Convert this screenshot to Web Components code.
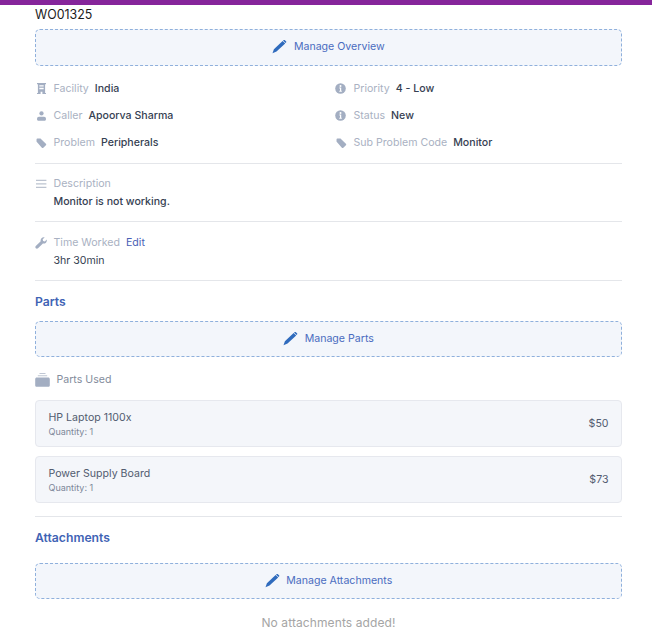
<!DOCTYPE html>
<html><head><meta charset="utf-8">
<style>
html,body{margin:0;padding:0;background:#fff;font-family:Inter,"Liberation Sans",sans-serif;}
</style></head><body>
<work-order></work-order>
<script>
const icons={
 building:'<svg width="9" height="11" viewBox="0 0 10 12" style="margin-left:1.5px"><path fill="#a3aec2" d="M0 0h10v1.2H9V11h1v1H6V9.5H4V12H0v-1h1V1.2H0zM2.6 2.4v1.5h4.8V2.4zM2.6 5.2v1.5h4.8V5.2z"/></svg>',
 user:'<svg width="9" height="10" viewBox="0 0 11 12" style="margin-left:1.5px"><circle cx="5.5" cy="2.8" r="2.6" fill="#a3aec2"/><path fill="#a3aec2" d="M2.4 6.8h6.2c1.3 0 2.3 1 2.3 2.2v1.4c0 .8-.5 1.4-1.2 1.4H1.3c-.7 0-1.2-.6-1.2-1.4V9c0-1.2 1-2.2 2.3-2.2z"/></svg>',
 tag:'<svg width="10.5" height="10.5" viewBox="0 0 12 12" style="margin:1px 0 0 1px"><path fill="#a3aec2" d="M.6 1.6C.6 1 1 .6 1.6.6h3.1c.4 0 .7.1 1 .4l5.6 5.6c.5.5.5 1.2 0 1.7l-2.9 2.9c-.5.5-1.2.5-1.7 0L1 4.7c-.3-.3-.4-.6-.4-1z"/></svg>',
 info:'<svg width="11" height="11" viewBox="0 0 11 11"><circle cx="5.5" cy="5.5" r="5.3" fill="#a3aec2"/><circle cx="5.5" cy="3" r="1" fill="#fff"/><path fill="#fff" d="M4.3 4.6h1.9v3.2h.6v1H4.3v-1h.7V5.6h-.7z"/></svg>',
 menu:'<svg width="11" height="10" viewBox="0 0 11 10" style="margin-left:.5px"><path fill="#bcc3d0" d="M0 .8h10.4v1.3H0zM0 4.3h10.4v1.3H0zM0 7.8h10.4v1.3H0z"/></svg>',
 wrench:'<svg width="12" height="12" viewBox="0 0 12 12"><path fill="#a3aec2" d="M11.7 2.6c.3 1.1 0 2.3-.8 3.1-.8.8-1.9 1-3 .7L3 11.3c-.6.6-1.6.6-2.2 0-.6-.6-.6-1.6 0-2.2l4.9-4.9c-.3-1.1 0-2.2.8-3C7.3.4 8.5.1 9.6.4L7.7 2.3l.4 1.8 1.8.4z"/></svg>',
 box:'<svg width="15" height="14" viewBox="0 0 15 14"><path fill="#c0c7d4" d="M4.5 0h6v1h-6zM2.8 2.2h9.4v1H2.8z"/><path fill="#a3aec2" d="M1.8 4.6h11.4c.9 0 1.6.7 1.6 1.6v6c0 .9-.7 1.6-1.6 1.6H1.8C.9 13.8.2 13.1.2 12.2v-6c0-.9.7-1.6 1.6-1.6z"/></svg>'
};
const pencil='<svg width="15" height="14" viewBox="0 0 15 14"><path fill="#2f6bbd" d="M10.6.9l2.6 2.5-8.7 8.2-4 1.6 1.4-3.9z M11.5.2c.4-.3 1-.3 1.4 0l1.1 1c.4.4.4 1 0 1.4l-.5.4-2.5-2.4z"/></svg>';

class Base extends HTMLElement{
 constructor(){super();this.attachShadow({mode:'open'}).innerHTML=this.markup();}
}
class ManageButton extends Base{
 markup(){return `<style>
 :host{display:flex;box-sizing:border-box;height:var(--h,37px);align-items:center;justify-content:center;gap:6.5px;background:#f3f6fb;border:1px dashed #8fb0dc;border-radius:5px;color:#4a6cc0;font-size:10.6px;line-height:14px}
 svg{display:block}
 </style>${pencil}<slot></slot>`;}
}
class InfoItem extends Base{
 markup(){return `<style>
 :host{display:flex;align-items:center;height:14px;font-size:10.6px;line-height:14px;color:#a9b1c2}
 .i{width:18.5px;display:flex;align-items:center;flex:none}
 b{font-weight:500;color:#364152;margin-left:6px}
 </style><span class="i">${icons[this.getAttribute('icon')]}</span><span>${this.getAttribute('label')}</span><b><slot></slot></b>`;}
}
class BlockItem extends Base{
 markup(){return `<style>
 :host{display:block;font-size:10.6px;line-height:14px;color:#a9b1c2}
 .h{display:flex;align-items:center;height:14px}
 .i{width:18.5px;display:flex;align-items:center;flex:none}
 .v{display:block;margin:4px 0 0 18.5px;color:#364152;font-weight:var(--w,500)}
 </style><div class="h"><span class="i">${icons[this.getAttribute('icon')]}</span><span>${this.getAttribute('label')}</span><slot name="action"></slot></div><div class="v"><slot></slot></div>`;}
}
class SectionTitle extends Base{
 markup(){return `<style>
 :host{display:block;font-size:12.2px;line-height:16px;font-weight:600;color:#3f63b5}
 </style><slot></slot>`;}
}
class PartCard extends Base{
 markup(){return `<style>
 :host{display:flex;box-sizing:border-box;align-items:center;justify-content:space-between;padding:0 12.5px;background:#f4f6fa;border:1px solid #e6e8ee;border-radius:4px;height:var(--h,47px);color:#525c70}
 .l{padding-top:1px}
 .n{font-size:10.6px;line-height:14px;display:block}
 .q{font-size:9px;line-height:11px;color:#7d8799;display:block;margin-top:1px}
 .p{font-size:10.6px;line-height:14px;padding-top:1px}
 </style><div class="l"><span class="n">${this.getAttribute('name')}</span><span class="q">Quantity: ${this.getAttribute('qty')}</span></div><div class="p">${this.getAttribute('price')}</div>`;}
}
class Divider extends Base{
 markup(){return `<style>:host{display:block;height:1px;background:#e4e6ea}</style>`;}
}
class WorkOrder extends Base{
 markup(){return `<style>
 :host{display:block;font-family:Inter,"Liberation Sans",sans-serif}
 .bar{height:4.5px;background:#86259b}
 .wrap{display:flex;flex-direction:column;padding:2px 30px 0 35px}
 .id{font-size:12.4px;line-height:15px;color:#1a1a1a;margin-bottom:7px}
 .grid{display:grid;grid-template-columns:300px 1fr;row-gap:13px;margin-top:16px}
 a{text-decoration:none}
 .used{display:flex;align-items:center;gap:6.5px;margin-top:16px;font-size:10.6px;line-height:14px;color:#838c9c}
 .used svg{display:block}
 .none{text-align:center;font-size:12px;line-height:16px;color:#a5a5a5;margin-top:16px;letter-spacing:.1px}
 </style>
 <div class="bar"></div>
 <div class="wrap">
  <div class="id">WO01325</div>
  <manage-button>Manage Overview</manage-button>
  <div class="grid">
   <info-item icon="building" label="Facility">India</info-item>
   <info-item icon="info" label="Priority">4 - Low</info-item>
   <info-item icon="user" label="Caller">Apoorva Sharma</info-item>
   <info-item icon="info" label="Status">New</info-item>
   <info-item icon="tag" label="Problem">Peripherals</info-item>
   <info-item icon="tag" label="Sub Problem Code">Monitor</info-item>
  </div>
  <line-divider style="margin-top:13px"></line-divider>
  <block-item icon="menu" label="Description" style="margin-top:13px">Monitor is not working.</block-item>
  <line-divider style="margin-top:12px"></line-divider>
  <block-item icon="wrench" label="Time Worked" style="margin-top:14px;--w:400"><a slot="action" style="color:#4a5fb5;margin-left:6px">Edit</a>3hr 30min</block-item>
  <line-divider style="margin-top:12px"></line-divider>
  <section-title style="margin-top:13px">Parts</section-title>
  <manage-button style="margin-top:11px;--h:36px">Manage Parts</manage-button>
  <div class="used">${icons.box}<span>Parts Used</span></div>
  <part-card name="HP Laptop 1100x" qty="1" price="$50" style="margin-top:13px"></part-card>
  <part-card name="Power Supply Board" qty="1" price="$73" style="margin-top:9px"></part-card>
  <line-divider style="margin-top:13px"></line-divider>
  <section-title style="margin-top:13px">Attachments</section-title>
  <manage-button style="margin-top:17px;--h:36px">Manage Attachments</manage-button>
  <div class="none">No attachments added!</div>
 </div>`;}
}
customElements.define('manage-button',ManageButton);
customElements.define('info-item',InfoItem);
customElements.define('block-item',BlockItem);
customElements.define('section-title',SectionTitle);
customElements.define('part-card',PartCard);
customElements.define('line-divider',Divider);
customElements.define('work-order',WorkOrder);
</script>
</body></html>
